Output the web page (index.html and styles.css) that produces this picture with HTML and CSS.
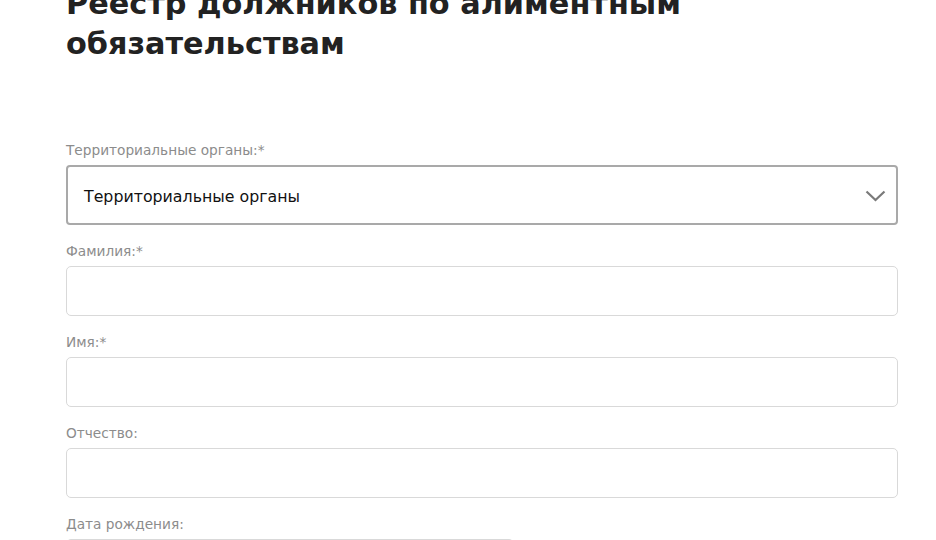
FILE: index.html
```html
<!DOCTYPE html>
<html lang="ru">
<head>
<meta charset="utf-8">
<title>Реестр должников по алиментным обязательствам</title>
<link rel="stylesheet" href="styles.css">
</head>
<body>
<main class="page">
  <h1 class="title">Реестр должников по алиментным обязательствам</h1>
  <form class="form">
    <div class="field">
      <label class="label">Территориальные органы:*</label>
      <div class="select">
        <span class="select-text">Территориальные органы</span>
        <svg class="chevron" width="21" height="12" viewBox="0 0 21 12"><path d="M1.5 1.5 L10.5 10 L19.5 1.5" fill="none" stroke="#7a7a7a" stroke-width="2.2"/></svg>
      </div>
    </div>
    <div class="field">
      <label class="label">Фамилия:*</label>
      <div class="input"></div>
    </div>
    <div class="field">
      <label class="label">Имя:*</label>
      <div class="input"></div>
    </div>
    <div class="field">
      <label class="label">Отчество:</label>
      <div class="input"></div>
    </div>
    <div class="field">
      <label class="label">Дата рождения:</label>
      <div class="input input-date"></div>
    </div>
  </form>
</main>
</body>
</html>
```
FILE: styles.css
```css
html, body {
  margin: 0;
  padding: 0;
  background: #fff;
  overflow: hidden;
}
body {
  font-family: "DejaVu Sans", "Noto Sans", sans-serif;
  color: #222;
}
.page {
  width: 832px;
  padding-left: 66px;
}
.title {
  margin: -16px 0 0 0;
  font-size: 30.3px;
  line-height: 40px;
  font-weight: 700;
  color: #222222;
  width: 720px;
}
.form {
  margin-top: 76px;
  display: flex;
  flex-direction: column;
  gap: 16px;
}
.field {
  display: flex;
  flex-direction: column;
  gap: 5px;
}
.label {
  font-size: 13.7px;
  line-height: 20px;
  color: #8c8c8c;
}
.select {
  box-sizing: border-box;
  height: 60px;
  border: 2px solid #a9a9a9;
  border-radius: 4px;
  display: flex;
  align-items: center;
  justify-content: space-between;
  padding: 2px 10px 0 16px;
}
.select-text {
  font-size: 15.8px;
  color: #111;
}
.chevron {
  display: block;
}
.input {
  box-sizing: border-box;
  height: 50px;
  border: 1px solid #d9d9d9;
  border-radius: 5px;
}
.input-date {
  width: 448px;
}
```
